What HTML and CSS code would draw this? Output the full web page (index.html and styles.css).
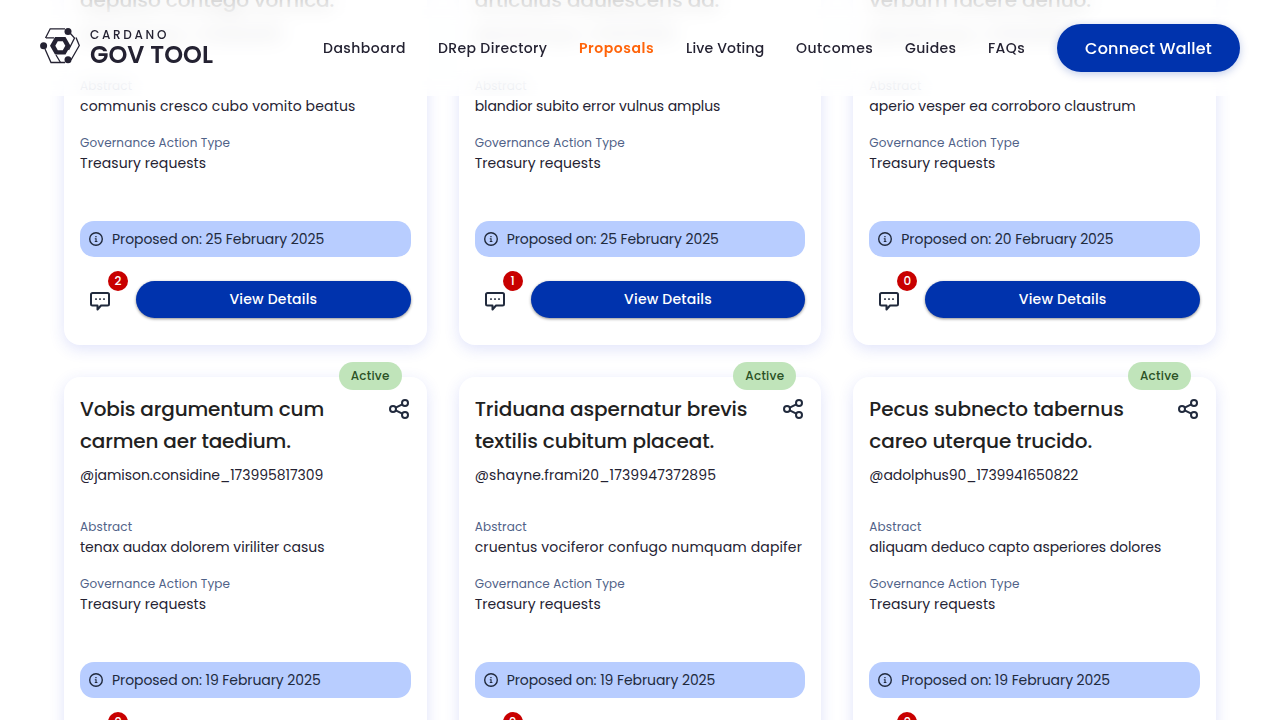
FILE: index.html
```html
<!DOCTYPE html>
<html lang="en">
<head>
<meta charset="utf-8">
<title>Cardano GovTool - Proposals</title>
<link rel="stylesheet" href="styles.css">
</head>
<body>
<svg class="sprite" aria-hidden="true">
  <symbol id="share" viewBox="0 0 24 24"><g fill="none" stroke="currentColor" stroke-width="2"><circle cx="5" cy="12" r="3"/><circle cx="17" cy="6" r="3"/><circle cx="17" cy="18" r="3"/><path d="M7.700 10.700l6.600-3.300M7.700 13.300l6.600 3.300"/></g></symbol>
  <symbol id="info" viewBox="0 0 16 16"><circle cx="8" cy="8" r="6.3" fill="none" stroke="currentColor" stroke-width="1.4"/><path d="M7.3 5h1.300v1.200H7.300zM6.800 7.200h1.800v2.900h.8v1H6.800v-1h.7V8.200h-.7z" fill="currentColor"/></symbol>
  <symbol id="comment" viewBox="0 0 24 24"><path d="M4.500 4h15a1.500 1.500 0 0 1 1.500 1.500v9.500a1.500 1.500 0 0 1-1.500 1.500H13L9.500 20.500V16.500H4.500A1.500 1.500 0 0 1 3 15V5.500A1.500 1.500 0 0 1 4.500 4z" fill="none" stroke="currentColor" stroke-width="2" stroke-linejoin="round"/><path d="M7.200 9.300h1.600v1.600H7.200zM11.200 9.300h1.600v1.600h-1.600zM15.200 9.300h1.600v1.600h-1.600z" fill="currentColor"/></symbol>
</svg>
<header class="header">
  <a class="logo">
    <svg class="logo-mark" viewBox="0 0 40 36"><g fill="none" stroke="currentColor" stroke-width="1.3"><path d="M25 .8H10.200L5.500 10M5 21l6 13.500h14M36 9.500l3.300 8L31 32"/><path d="M14 9.800H6M30 5l4.500 5L28.500 22M16 27l4.500 7.500"/></g><path d="M15 9h10.500L30.500 17.800l-5 8.800H15L10 17.800zM17.800 13.300L15.300 17.800l2.500 4.500h5l2.500-4.500-2.500-4.500z" fill="currentColor" fill-rule="evenodd"/><g fill="currentColor"><circle cx="28" cy="3.500" r="3.500"/><circle cx="3.600" cy="17.800" r="3.500"/><circle cx="28" cy="31.800" r="3.500"/></g></svg>
    <span class="logo-text"><span class="logo-top">CARDANO</span><span class="logo-name">GOV TOOL</span></span>
  </a>
  <nav class="nav">
    <a class="n1">Dashboard</a><a class="n2">DRep Directory</a><a class="n3 current">Proposals</a><a class="n4">Live Voting</a><a class="n5">Outcomes</a><a class="n6">Guides</a><a class="n7">FAQs</a>
    <button class="connect">Connect Wallet</button>
  </nav>
</header>
<main class="grid">
  <article class="card"><span class="status">Active</span><div class="head"><h2>Vobis ager<br>depulso contego vomica.</h2><svg class="share"><use href="#share"/></svg></div><p class="user">@proposer.gov_17404824091</p><p class="label">Abstract</p><p class="value wide">communis cresco cubo vomito beatus</p><p class="label">Governance Action Type</p><p class="value type">Treasury requests</p><div class="date"><svg><use href="#info"/></svg><span>Proposed on: 25 February 2025</span></div><div class="actions"><span class="comments"><svg><use href="#comment"/></svg><b>2</b></span><button class="details">View Details</button></div></article>
  <article class="card"><span class="status">Active</span><div class="head"><h2>Tergo beatae<br>articulus adulescens ad.</h2><svg class="share"><use href="#share"/></svg></div><p class="user">@proposer.gov_17404791330</p><p class="label">Abstract</p><p class="value tight">blandior subito error vulnus amplus</p><p class="label">Governance Action Type</p><p class="value type">Treasury requests</p><div class="date"><svg><use href="#info"/></svg><span>Proposed on: 25 February 2025</span></div><div class="actions"><span class="comments"><svg><use href="#comment"/></svg><b>1</b></span><button class="details">View Details</button></div></article>
  <article class="card"><span class="status">Active</span><div class="head"><h2>Conor clam<br>verbum facere denuo.</h2><svg class="share"><use href="#share"/></svg></div><p class="user">@proposer.gov_17400412058</p><p class="label">Abstract</p><p class="value">aperio vesper ea corroboro claustrum</p><p class="label">Governance Action Type</p><p class="value type">Treasury requests</p><div class="date"><svg><use href="#info"/></svg><span>Proposed on: 20 February 2025</span></div><div class="actions"><span class="comments"><svg><use href="#comment"/></svg><b>0</b></span><button class="details">View Details</button></div></article>
  <article class="card"><span class="status">Active</span><div class="head"><h2 class="tighter">Vobis argumentum cum<br>carmen aer taedium.</h2><svg class="share"><use href="#share"/></svg></div><p class="user">@jamison.considine_173995817309</p><p class="label">Abstract</p><p class="value">tenax audax dolorem viriliter casus</p><p class="label">Governance Action Type</p><p class="value type">Treasury requests</p><div class="date"><svg><use href="#info"/></svg><span>Proposed on: 19 February 2025</span></div><div class="actions"><span class="comments"><svg><use href="#comment"/></svg><b>0</b></span><button class="details">View Details</button></div></article>
  <article class="card"><span class="status">Active</span><div class="head"><h2>Triduana aspernatur brevis<br>textilis cubitum placeat.</h2><svg class="share"><use href="#share"/></svg></div><p class="user wide">@shayne.frami20_1739947372895</p><p class="label">Abstract</p><p class="value wide">cruentus vociferor confugo numquam dapifer</p><p class="label">Governance Action Type</p><p class="value type">Treasury requests</p><div class="date"><svg><use href="#info"/></svg><span>Proposed on: 19 February 2025</span></div><div class="actions"><span class="comments"><svg><use href="#comment"/></svg><b>0</b></span><button class="details">View Details</button></div></article>
  <article class="card"><span class="status">Active</span><div class="head"><h2>Pecus subnecto tabernus<br>careo uterque trucido.</h2><svg class="share"><use href="#share"/></svg></div><p class="user tight">@adolphus90_1739941650822</p><p class="label">Abstract</p><p class="value tight">aliquam deduco capto asperiores dolores</p><p class="label">Governance Action Type</p><p class="value type">Treasury requests</p><div class="date"><svg><use href="#info"/></svg><span>Proposed on: 19 February 2025</span></div><div class="actions"><span class="comments"><svg><use href="#comment"/></svg><b>0</b></span><button class="details">View Details</button></div></article>
</main>
</body>
</html>
```
FILE: styles.css
```css
*{box-sizing:border-box}
html,body{height:720px;overflow:hidden}
body{margin:0;background:#fff;font-family:Poppins,Inter,"Open Sans",sans-serif;color:#242232}
h2,p{margin:0}
button{font-family:inherit;border:0;color:#fff;background:#0033ad;font-weight:500;padding:0}
.sprite{position:absolute;width:0;height:0}
.header{position:fixed;z-index:5;top:0;left:0;right:0;height:96px;padding:0 40px;display:flex;align-items:center;justify-content:space-between}
.header::before{content:"";position:absolute;z-index:-1;inset:0;background:rgba(255,255,255,.8);backdrop-filter:blur(10px);-webkit-mask-image:linear-gradient(rgba(0,0,0,.9) 14px,#000 24px,#000 74px,rgba(0,0,0,.92) 80px);mask-image:linear-gradient(rgba(0,0,0,.9) 14px,#000 24px,#000 74px,rgba(0,0,0,.92) 80px)}
.logo{display:flex;align-items:center;gap:10px;padding-bottom:4px}
.logo-mark{width:40px;height:36px}
.logo-text{display:flex;flex-direction:column;white-space:nowrap;padding-top:3px}
.logo-top{font-size:12px;line-height:14px;letter-spacing:2.7px;font-weight:500}
.logo-name{font-size:24px;line-height:25px;font-weight:600;letter-spacing:.05px}
.nav{display:flex;align-items:center;gap:32px;font-size:14px;font-weight:500;white-space:nowrap}
.nav a{line-height:24px}
.n1{width:83px;letter-spacing:.47px}
.n2{width:109px;letter-spacing:.36px}
.n3{width:75px;letter-spacing:.55px}
.n4{width:78px;letter-spacing:.18px}
.n5{width:77px;letter-spacing:.5px}
.n6{width:51px;letter-spacing:.35px}
.n7{width:37px;letter-spacing:.4px}
.nav .current{color:#ff640a;font-weight:600}
.connect{width:183px;height:48px;border-radius:24px;font-size:16px;letter-spacing:.2px;box-shadow:0 2px 8px rgba(0,51,173,.25)}
.grid{display:grid;grid-template-columns:repeat(3,minmax(0,1fr));gap:32px;padding:0 64px;margin-top:-64px}
.card{position:relative;height:409px;padding:16px;border-radius:16px;background:#fff;box-shadow:0 4px 15px rgba(47,70,220,.15);display:flex;flex-direction:column}
.status{position:absolute;top:-15px;right:25px;width:63px;height:28px;border-radius:14px;background:#c0e4ba;color:#2b5125;font-size:12px;line-height:28px;font-weight:500;letter-spacing:.25px;text-align:center}
.head{display:flex;justify-content:space-between;height:64px}
.head h2{font-size:20px;line-height:32px;font-weight:500;color:#212121;white-space:nowrap;letter-spacing:-.08px}
.head .tighter{letter-spacing:-.17px}
.share{width:24px;height:24px;margin:4px -1px 0 -24px;color:#212a3d;flex:none}
.user{font-size:14px;line-height:24px;margin:6px 0 31px;white-space:nowrap;letter-spacing:-.05px}
.label{font-size:12px;line-height:18px;color:#506288;letter-spacing:.14px}
.value{font-size:14px;line-height:22px;margin-bottom:17px;white-space:nowrap}
.type{letter-spacing:.08px}
.wide{letter-spacing:.14px}
.tight{letter-spacing:-.08px}
.date{height:36px;margin-top:30px;border-radius:14px;background:#b8cdff;display:flex;align-items:center;gap:8px;padding-left:8px;font-size:14px;letter-spacing:-.08px;color:#212a3d;flex:none}
.date svg{width:16px;height:16px}
.actions{display:flex;margin-top:24px;height:37px}
.comments{position:relative;width:56px;padding:8px;color:#212a3d}
.comments svg{width:24px;height:24px}
.comments b{position:absolute;left:28px;top:-10px;width:20px;height:20px;border-radius:50%;background:#c80000;color:#fff;font-size:12px;font-weight:500;line-height:20px;text-align:center}
.details{flex:1;border-radius:19px;font-size:14px;letter-spacing:.2px;box-shadow:0 1px 3px rgba(0,0,0,.45)}
```
